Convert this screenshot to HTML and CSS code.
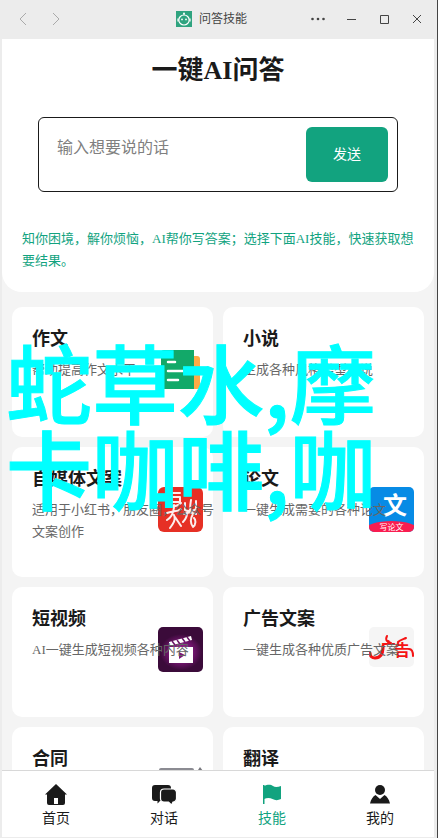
FILE: index.html
```html
<!DOCTYPE html>
<html lang="zh-CN">
<head>
    <meta charset="UTF-8">
    <meta name="viewport" content="width=device-width, initial-scale=1.0">
    <title>问答技能</title>
    <link rel="stylesheet" href="styles.css">
</head>
<body>
    <div class="ventana">
        <header class="barra">
            <div class="flechas">
                <button aria-label="后退"><svg width="16" height="16" viewBox="0 0 16 16"><path d="M10 2L4 8l6 6"/></svg></button>
                <button aria-label="前进"><svg width="16" height="16" viewBox="0 0 16 16"><path d="M5 2l6 6-6 6"/></svg></button>
            </div>
            <div class="app">
                <svg width="16" height="16" viewBox="0 0 16 16">
                    <rect width="16" height="16" fill="#2fa37f"/>
                    <path d="M8 2v2" stroke="#fff"/>
                    <circle cx="8" cy="2.4" r=".9" fill="#fff"/>
                    <ellipse cx="8" cy="9" rx="5.2" ry="5" fill="none" stroke="#fff" stroke-width="1.2"/>
                    <path d="M2 7.5v3M14 7.5v3" stroke="#fff" stroke-width="1.2"/>
                    <circle cx="6" cy="8.4" r=".9" fill="#fff"/>
                    <circle cx="10" cy="8.4" r=".9" fill="#fff"/>
                </svg>
                <span>问答技能</span>
            </div>
            <div class="controles">
                <button aria-label="更多"><svg width="16" height="16" viewBox="0 0 16 16"><g fill="#444" stroke="none"><circle cx="2.5" cy="8" r="1.3"/><circle cx="8" cy="8" r="1.3"/><circle cx="13.5" cy="8" r="1.3"/></g></svg></button>
                <button aria-label="最小化"><svg width="16" height="16" viewBox="0 0 16 16"><path d="M4 8.5h9"/></svg></button>
                <button aria-label="最大化"><svg width="16" height="16" viewBox="0 0 16 16"><path d="M4.5 4.5h8v8h-8z"/></svg></button>
                <button aria-label="关闭"><svg width="16" height="16" viewBox="0 0 16 16"><path d="M4 4l8 8M12 4l-8 8"/></svg></button>
            </div>
        </header>

        <main class="contenido">
            <section class="cabecera">
                <h1>一键AI问答</h1>
                <form class="pregunta" action="#">
                    <textarea aria-label="输入想要说的话" placeholder="输入想要说的话"></textarea>
                    <button type="submit">发送</button>
                </form>
                <p>知你困境，解你烦恼，AI帮你写答案；选择下面AI技能，快速获取想要结果。</p>
            </section>

            <section class="tarjetas">
                <article class="tarjeta">
                    <h2>作文</h2>
                    <p>帮助提高作文水平</p>
                    <svg class="icono" viewBox="0 0 45 45">
                        <rect x="30" y="9" width="12" height="33" rx="3" fill="#ffab45"/>
                        <path d="M6 3h30v39H6a3 3 0 0 1-3-3V6a3 3 0 0 1 3-3z" fill="#12a969"/>
                        <path d="M10 15h7M10 24h15M10 33h10" stroke="#fff" stroke-width="2.5" stroke-linecap="round"/>
                    </svg>
                </article>
                <article class="tarjeta">
                    <h2>小说</h2>
                    <p>生成各种风格类型小说</p>
                </article>
                <article class="tarjeta">
                    <h2>自媒体文案</h2>
                    <p>适用于小红书，朋友圈，公众号文案创作</p>
                    <svg class="icono" viewBox="0 0 45 45">
                        <rect width="45" height="45" rx="6" fill="#e63025"/>
                        <g fill="none" stroke="#fbeeee" stroke-width="2" stroke-linecap="round" stroke-linejoin="round">
                            <path d="M15 6h7M13 10h9v5h-8zM10 19c6 1 11-1 13-3M16 18c0 8-2 12-7 15M9 26c5-2 10-1 14-4M16 28c2 5-1 9-4 13M17 30l6 9"/>
                            <path d="M33 13c-1 5-1 9-1 13M27 16v7c4 2 9 1 11-1v-8M26 27c4-2 8-2 12 0M29 26c0 5-2 7-4 9M35 27c-3 5-3 9 0 13 3-2 3-7 1-9"/>
                        </g>
                    </svg>
                </article>
                <article class="tarjeta">
                    <h2>论文</h2>
                    <p>一键生成需要的各种论文</p>
                    <svg class="icono" viewBox="0 0 45 45">
                        <clipPath id="marco"><rect width="45" height="45" rx="5"/></clipPath>
                        <g clip-path="url(#marco)">
                            <rect width="45" height="45" fill="#078be5"/>
                            <ellipse cx="22.5" cy="43" rx="27" ry="9" fill="#f91d50"/>
                        </g>
                        <text x="26" y="27" class="letra pincel">文</text>
                        <text x="22.5" y="43" class="letra rotulo">写论文</text>
                    </svg>
                </article>
                <article class="tarjeta">
                    <h2>短视频</h2>
                    <p>AI一键生成短视频各种内容</p>
                    <svg class="icono" viewBox="0 0 45 45">
                        <defs>
                            <radialGradient id="brillo">
                                <stop offset="0" stop-color="#b32aa8"/>
                                <stop offset=".6" stop-color="#70146c"/>
                                <stop offset="1" stop-color="#3b0b3a"/>
                            </radialGradient>
                        </defs>
                        <rect width="45" height="45" rx="5" fill="#3b0b3a"/>
                        <ellipse cx="23" cy="25" rx="21" ry="18" fill="url(#brillo)"/>
                        <path d="M11 20h24v16H11z" fill="#fff"/>
                        <path d="M11 15l22-6 1 4-23 6z" fill="#fff"/>
                        <path d="M14 14l3 4M19 13l3 4M24 11l3 4M29 10l3 4" stroke="#6c1768" stroke-width="1.5"/>
                        <path d="M21 25l6 3-6 4z" fill="#7b1777"/>
                    </svg>
                </article>
                <article class="tarjeta">
                    <h2>广告文案</h2>
                    <p>一键生成各种优质广告文案</p>
                    <svg class="icono" viewBox="0 0 45 45">
                        <rect width="45" height="40" rx="5" fill="#f5f5f5"/>
                        <g fill="none" stroke="#f51313" stroke-linecap="round">
                            <path d="M18 9c-2 4 0 6 4 7" stroke-width="2"/>
                            <path d="M14 19c0 8-3 12-8 12-3 0-5-2-5-5" stroke-width="3"/>
                            <path d="M37 11c-2 1-6 2-8 4M40 22c3 0 4 3 4 7" stroke-width="2"/>
                        </g>
                        <text x="19" y="27" class="letra anuncio">广</text>
                        <text x="33" y="29" class="letra anuncio">告</text>
                    </svg>
                </article>
                <article class="tarjeta">
                    <h2>合同</h2>
                    <svg class="icono" viewBox="0 0 45 45">
                        <rect x="1" y="1" width="35" height="43" rx="2" fill="#8b8b92"/>
                        <rect x="3" y="4" width="31" height="38" fill="#fff"/>
                        <path d="M42 0l3 4-14 20-4 1 1-4z" fill="#77777d"/>
                    </svg>
                </article>
                <article class="tarjeta">
                    <h2>翻译</h2>
                </article>
            </section>
        </main>

        <nav class="menu">
            <a href="#">
                <svg width="24" height="24" viewBox="0 0 24 24"><path d="M12 1l11 10.5h-2V20a2 2 0 0 1-2 2H5a2 2 0 0 1-2-2v-8.5H1z"/><path d="M10 15h4v6h-4z" fill="#fff"/></svg>
                首页
            </a>
            <a href="#">
                <svg width="26" height="24" viewBox="0 0 26 24"><path d="M4 2h13a3 3 0 0 1 3 3v10a3 3 0 0 1-3 3H9l-2.5 2.5V18H4a3 3 0 0 1-3-3V5a3 3 0 0 1 3-3z"/><path d="M13 6h9a3.5 3.5 0 0 1 3.5 3.5v6A3.5 3.5 0 0 1 22 19l-1.5 3-3-3H13a3.5 3.5 0 0 1-3.5-3.5v-6A3.5 3.5 0 0 1 13 6z" stroke="#fff" stroke-width="1.2"/></svg>
                对话
            </a>
            <a href="#" class="activo">
                <svg width="24" height="24" viewBox="0 0 24 24"><path d="M3 2h1.5v19H3z"/><path d="M4 3c4-2 7-1.5 9 0s5 1 8 0v13c-3 1.5-6 1.5-8.5 0S7 14.5 4 16z"/></svg>
                技能
            </a>
            <a href="#">
                <svg width="24" height="24" viewBox="0 0 24 24"><circle cx="12" cy="7" r="5"/><path d="M2 20.5c1-4.5 3-7 5.5-8.5L12 16l4.5-4c2.5 1.5 4.5 4 5.5 8.5z"/></svg>
                我的
            </a>
        </nav>
    </div>
    <div class="marca">蛇草水,摩<br>卡咖啡,咖</div>
</body>
</html>
```
FILE: styles.css
```css
*{
    box-sizing: border-box;
}
body{
    margin: 0;
    font-family: "Liberation Serif", "Noto Sans CJK SC", serif;
    color: #1a1a1a;
    background-color: #ececec;
    overflow: hidden;
}
h1, h2, p{
    margin: 0;
}
button{
    font-family: inherit;
    border: none;
    padding: 0;
}
.ventana{
    display: flex;
    flex-direction: column;
    height: 100vh;
    padding: 0 3px 1px 2px;
    border-right: 1px solid #444;
}

/* barra superior */
.barra{
    display: grid;
    grid-template-columns: 1fr auto 1fr;
    align-items: center;
    flex: none;
    height: 39px;
    padding: 0 9px 2px 14px;
}
.barra button{
    display: flex;
    background: none;
}
.barra svg{
    display: block;
}
.barra button svg{
    fill: none;
    stroke: #444;
}
.flechas{
    display: flex;
    gap: 16px;
}
.barra .flechas svg{
    stroke: #aaa;
}
.app{
    display: flex;
    align-items: center;
    gap: 7px;
    margin-right: 18px;
    font-size: 12px;
    line-height: 16px;
    color: #444;
}
.controles{
    display: flex;
    justify-content: flex-end;
    gap: 17px;
}

/* contenido */
.contenido{
    flex: 1;
    min-height: 0;
    overflow: hidden;
    background-color: #f4f4f4;
}
.cabecera{
    padding: 12px 20px 20px;
    background-color: #fff;
    border-radius: 0 0 20px 20px;
}
.cabecera h1{
    font-size: 26px;
    line-height: 40px;
    text-align: center;
}
.pregunta{
    display: flex;
    gap: 10px;
    height: 75px;
    margin: 26px 16px 36px;
    padding: 9px;
    border: 1px solid #1a1a1a;
    border-radius: 6px;
}
.pregunta textarea{
    flex: 1;
    min-width: 0;
    padding: 8px 9px;
    border: none;
    outline: none;
    resize: none;
    font-family: inherit;
    font-size: 16px;
    line-height: 26px;
}
.pregunta textarea::placeholder{
    color: #808080;
}
.pregunta button{
    width: 82px;
    padding-bottom: 3px;
    border-radius: 6px;
    background-color: #12a37f;
    color: #fff;
    font-size: 14px;
}
.cabecera p{
    font-size: 13px;
    line-height: 22px;
    color: #12a37f;
}

/* tarjetas */
.tarjetas{
    display: grid;
    grid-template-columns: 1fr 1fr;
    gap: 10px;
    padding: 15px 10px;
}
.tarjeta{
    position: relative;
    min-width: 0;
    min-height: 130px;
    padding: 20px 0 0 20px;
    border-radius: 10px;
    background-color: #fff;
}
.tarjeta h2{
    font-size: 18px;
    line-height: 24px;
}
.tarjeta p{
    position: relative;
    z-index: 1;
    margin: 8px -1px 0 0;
    font-size: 13px;
    line-height: 22px;
    color: #666;
}
.icono{
    position: absolute;
    top: 40px;
    right: 10px;
    width: 45px;
    height: 45px;
}
.letra{
    font-family: "Noto Sans CJK SC", sans-serif;
    font-weight: bold;
    text-anchor: middle;
    fill: #fff;
}
.pincel{
    font-size: 24px;
}
.rotulo{
    font-size: 8px;
    font-weight: normal;
}
.anuncio{
    font-size: 16px;
    fill: #f51313;
}

/* menu inferior */
.menu{
    display: flex;
    flex: none;
    height: 67px;
    border-top: 1px solid #d8d8d8;
    background-color: #fff;
}
.menu a{
    display: flex;
    flex: 1;
    flex-direction: column;
    align-items: center;
    gap: 2px;
    padding-top: 12px;
    font-size: 14px;
    line-height: 20px;
    color: #1a1a1a;
    text-decoration: none;
}
.menu svg{
    fill: currentColor;
}
.menu .activo{
    color: #12a37f;
}

.marca{
    position: absolute;
    top: 338px;
    left: 6px;
    z-index: 2;
    font-family: "Noto Sans CJK SC", sans-serif;
    font-size: 86px;
    font-weight: 500;
    line-height: 86px;
    -webkit-text-stroke: 1px #0ff;
    white-space: nowrap;
    color: #0ff;
    pointer-events: none;
}
```
